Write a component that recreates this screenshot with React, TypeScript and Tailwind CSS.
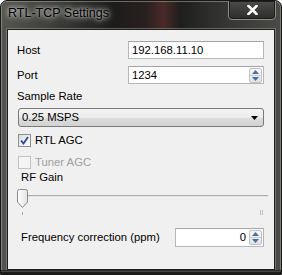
import React from "react";

const font = { fontFamily: '"Liberation Sans", Arial, sans-serif' };

function Spinner() {
  return (
    <div className="w-[13px] h-[15px] mr-[1px] flex flex-col border border-[#c3c3c3] rounded-[2px] bg-[linear-gradient(180deg,#f6f6f6,#e2e2e2)]">
      <div className="flex-1 flex items-center justify-center border-b border-[#cfcfcf]">
        <svg width="7" height="4" viewBox="0 0 7 4"><path d="M3.5 0 L7 4 L0 4 Z" fill="#4a6ea8" /></svg>
      </div>
      <div className="flex-1 flex items-center justify-center">
        <svg width="7" height="4" viewBox="0 0 7 4"><path d="M0 0 L7 0 L3.5 4 Z" fill="#4a6ea8" /></svg>
      </div>
    </div>
  );
}

export default function App() {
  return (
    <div
      className="w-[282px] h-[275px] flex flex-col rounded-t-[7px] overflow-hidden border border-[#161614] shadow-[inset_0_0_0_1px_rgba(170,170,160,0.55)] bg-[linear-gradient(90deg,#555550_0%,#3e3e3b_18%,#1c1c1a_40%,#2a2020_52%,#4a2a28_58%,#1e1e1c_64%,#353533_80%,#4a4a46_100%)]"
      style={font}
    >
      {/* title bar */}
      <div className="h-[28px] flex items-start justify-between shrink-0">
        <div className="pl-[7px] pt-[5px] text-[12.5px] leading-[15px] text-black [text-shadow:0_0_6px_rgba(255,255,255,0.75),0_0_10px_rgba(255,255,255,0.5),0_0_3px_rgba(255,255,255,0.6)]">
          RTL-TCP Settings
        </div>
        <div className="mr-[5px] -mt-[1px] w-[48px] h-[20px] rounded-b-[4px] border border-[#8e8e8a] shadow-[inset_0_0_0_1px_rgba(20,20,20,0.8)] bg-[linear-gradient(180deg,#4c4c4a,#2c2c2a)] flex items-center justify-center">
          <svg width="11" height="10" viewBox="0 0 11 10">
            <path d="M1.5 1 L9.5 9 M9.5 1 L1.5 9" stroke="#ffffff" strokeWidth="2.6" strokeLinecap="square" />
          </svg>
        </div>
      </div>

      {/* client area */}
      <div className="mx-[6px] h-[241px] shrink-0 border border-[#1e1e1e] shadow-[0_0_0_1px_rgba(150,150,140,0.55)] bg-[#f0f0f0] pl-[9px] pr-[10px] pt-[11px] flex flex-col text-[11.3px] leading-[13px] text-black">
        {/* Host */}
        <div className="flex items-center justify-between h-[18px]">
          <span>Host</span>
          <div className="w-[136px] h-[18px] bg-white border border-[#b5b7bd] border-t-[#a2a4aa] flex items-center pl-[3px]">
            192.168.11.10
          </div>
        </div>
        {/* Port */}
        <div className="flex items-center justify-between h-[18px] mt-[7px]">
          <span>Port</span>
          <div className="w-[136px] h-[18px] bg-white border border-[#b5b7bd] border-t-[#a2a4aa] flex items-center">
            <span className="flex-1 pl-[3px]">1234</span>
            <Spinner />
          </div>
        </div>
        {/* Sample rate */}
        <div className="mt-[6px] h-[13px]">Sample Rate</div>
        <div className="mt-[5px] ml-[1px] h-[19px] rounded-[3px] border border-[#7a7a7a] bg-[linear-gradient(180deg,#f4f4f4_0%,#ebebeb_50%,#dddddd_51%,#d2d2d2_100%)] flex items-center justify-between pl-[3px] pr-[5px]">
          <span>0.25 MSPS</span>
          <svg width="7" height="4" viewBox="0 0 7 4"><path d="M0 0 L7 0 L3.5 4 Z" fill="#000" /></svg>
        </div>
        {/* RTL AGC */}
        <div className="mt-[7px] ml-[1px] h-[13px] flex items-center">
          <div className="w-[13px] h-[13px] border border-[#8e8f8f] bg-[linear-gradient(135deg,#dcdcdc,#ffffff)] flex items-center justify-center">
            <svg width="9" height="9" viewBox="0 0 9 9">
              <path d="M1 4.5 L3.5 7.5 L8 1" stroke="#2a4aa0" strokeWidth="1.8" fill="none" />
            </svg>
          </div>
          <span className="ml-[4px]">RTL AGC</span>
        </div>
        {/* Tuner AGC */}
        <div className="mt-[9px] ml-[1px] h-[13px] flex items-center">
          <div className="w-[13px] h-[13px] border border-[#c2c2c2] bg-[#f4f4f4]" />
          <span className="ml-[4px] text-[#a0a0a0]">Tuner AGC</span>
        </div>
        {/* RF Gain */}
        <div className="mt-[2px] h-[13px] pl-[4px]">RF Gain</div>
        <div className="mt-[2px] h-[32px] relative">
          <div className="absolute left-[10px] right-[-4px] top-[9px] h-[2px] border-t border-[#b0b0b0] bg-[#e2e2e2]" />
          <svg className="absolute left-0 top-[3px]" width="11" height="19" viewBox="0 0 11 19">
            <defs>
              <linearGradient id="th" x1="0" y1="0" x2="1" y2="0">
                <stop offset="0" stopColor="#ffffff" />
                <stop offset="1" stopColor="#e4e4e4" />
              </linearGradient>
            </defs>
            <path d="M0.5 2.5 Q0.5 0.5 2.5 0.5 H8.5 Q10.5 0.5 10.5 2.5 V13 L5.5 18.5 L0.5 13 Z" fill="url(#th)" stroke="#8a8a8a" />
          </svg>
          <div className="absolute left-[5px] top-[26px] w-px h-[3px] bg-[#a8a8a8]" />
          <div className="absolute left-[243px] top-[24px] w-px h-[5px] bg-[#c0c0c0]" />
          <div className="absolute left-[245px] top-[24px] w-px h-[5px] bg-[#c0c0c0]" />
        </div>
        {/* Frequency correction */}
        <div className="mt-[10px] flex items-center justify-between h-[19px]">
          <span className="pl-[4px]">Frequency correction (ppm)</span>
          <div className="w-[89px] h-[19px] bg-white border border-[#b5b7bd] border-t-[#a2a4aa] flex items-center">
            <span className="flex-1 text-right pr-[3px]">0</span>
            <Spinner />
          </div>
        </div>
      </div>

      {/* bottom frame */}
      <div className="flex-1 mx-0 bg-[linear-gradient(180deg,#1a1a18_0%,#4a4a46_35%,#111110_70%,#2a2a28_100%)]" />
    </div>
  );
}
